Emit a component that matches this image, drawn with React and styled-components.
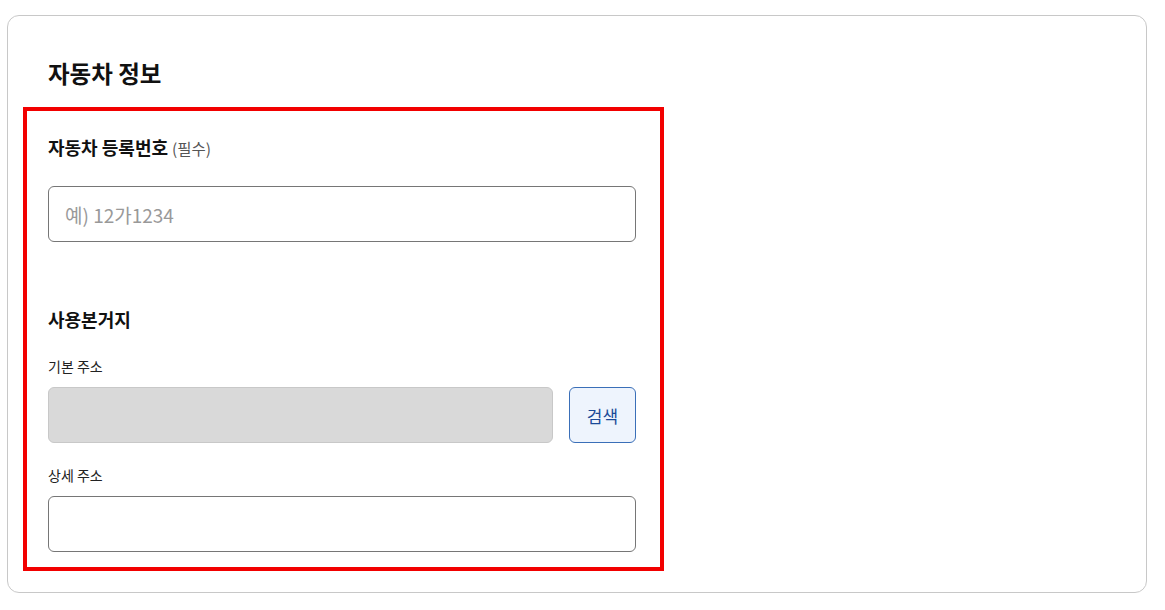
import styled, { createGlobalStyle } from 'styled-components'

const GlobalStyle = createGlobalStyle`
    * { box-sizing: border-box; }
    body {
        margin: 0;
        background: #fff;
        font-family: "Noto Sans CJK KR", "Noto Sans", sans-serif;
        color: #111;
    }
`

const App = () => {
    return (
        <Page>
            <GlobalStyle />
            <Card>
                <Title>자동차 정보</Title>

                <Section>
                    <FieldLabel>
                        자동차 등록번호 <Required>(필수)</Required>
                    </FieldLabel>
                    <TextInput placeholder="예) 12가1234" />

                    <SubTitle>사용본거지</SubTitle>

                    <SmallLabel>기본 주소</SmallLabel>
                    <AddressRow>
                        <TextInput $grow disabled readOnly />
                        <SearchButton type="button">검색</SearchButton>
                    </AddressRow>

                    <SmallLabel $top={22}>상세 주소</SmallLabel>
                    <TextInput />
                </Section>
            </Card>
        </Page>
    )
}

export default App

const Page = styled.div`
    padding: 15px 18px 0 7px;
`

const Card = styled.div`
    width: 1140px;
    height: 578px;
    border: 1px solid #c8c8c8;
    border-radius: 12px;
    padding: 41px 15px 0 15px;
`

const Title = styled.h2`
    margin: 0 0 18px 25px;
    font-size: 23.5px;
    line-height: 32px;
    font-weight: 700;
    color: #111;
`

const Section = styled.div`
    width: 641px;
    border: 4px solid #f20000;
    padding: 24px 24px 15px 21px;
    display: flex;
    flex-direction: column;
`

const FieldLabel = styled.div`
    font-size: 18px;
    line-height: 24px;
    font-weight: 700;
    margin-bottom: 26px;
`

const Required = styled.span`
    font-size: 15.5px;
    font-weight: 400;
    color: #555;
`

const TextInput = styled.input`
    flex: ${({ $grow }) => ($grow ? '1 1 auto' : 'none')};
    width: 100%;
    min-width: 0;
    height: 56px;
    border: 1px solid #767676;
    border-radius: 6px;
    padding: 0 16px;
    font-family: inherit;
    font-size: 19px;
    color: #111;
    background: #fff;
    outline: none;

    &::placeholder {
        color: #999;
    }

    &:disabled {
        background: #d9d9d9;
        border-color: #c8c8c8;
    }
`

const SubTitle = styled.div`
    margin-top: 65px;
    font-size: 18px;
    line-height: 24px;
    font-weight: 700;
`

const SmallLabel = styled.div`
    margin-top: ${({ $top }) => $top ?? 25}px;
    margin-bottom: 11px;
    font-size: 14px;
    line-height: 20px;
    color: #222;
`

const AddressRow = styled.div`
    display: flex;
    gap: 16px;
`

const SearchButton = styled.button`
    width: 67px;
    height: 56px;
    flex-shrink: 0;
    border: 1px solid #3a6fb8;
    border-radius: 6px;
    background: #eef4fd;
    color: #1a4a98;
    font-family: inherit;
    font-size: 17px;
    cursor: pointer;
`
